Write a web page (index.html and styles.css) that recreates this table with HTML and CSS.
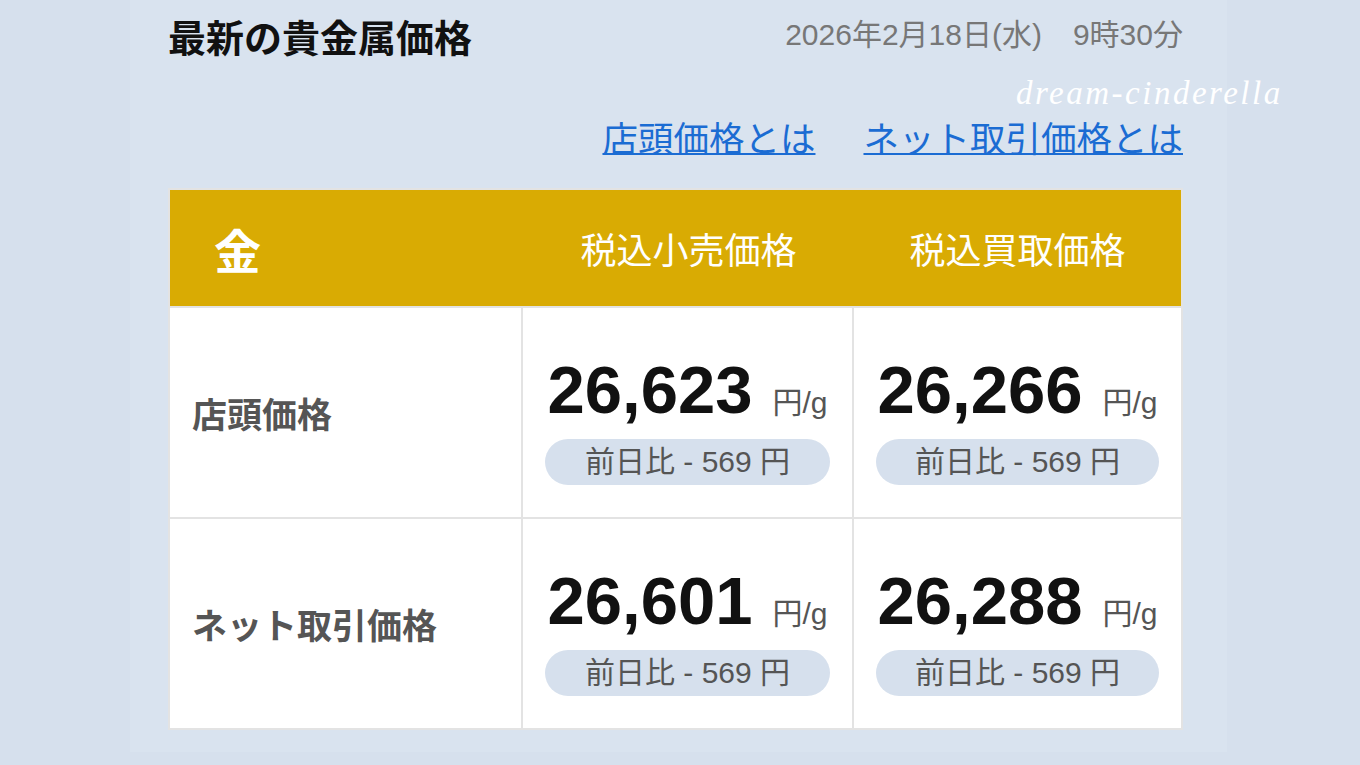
FILE: index.html
```html
<!DOCTYPE html>
<html lang="ja">
<head>
<meta charset="utf-8">
<title>最新の貴金属価格</title>
<link rel="stylesheet" href="styles.css">
</head>
<body>
<div class="page">
  <div class="top">
    <h1 class="title">最新の貴金属価格</h1>
    <div class="date">2026年2月18日(水)<span class="time">9時30分</span></div>
  </div>
  <div class="brand">dream-cinderella</div>
  <nav class="links">
    <a href="#">店頭価格とは</a>
    <a href="#">ネット取引価格とは</a>
  </nav>
  <div class="table">
    <div class="head">
      <div class="h-metal">金</div>
      <div class="h-col">税込小売価格</div>
      <div class="h-col">税込買取価格</div>
    </div>
    <div class="label">店頭価格</div>
    <div class="cell">
      <div class="price"><span class="num">26,623</span><span class="unit">円/g</span></div>
      <div class="diff">前日比 - 569 円</div>
    </div>
    <div class="cell">
      <div class="price"><span class="num">26,266</span><span class="unit">円/g</span></div>
      <div class="diff">前日比 - 569 円</div>
    </div>
    <div class="label">ネット取引価格</div>
    <div class="cell">
      <div class="price"><span class="num">26,601</span><span class="unit">円/g</span></div>
      <div class="diff">前日比 - 569 円</div>
    </div>
    <div class="cell">
      <div class="price"><span class="num">26,288</span><span class="unit">円/g</span></div>
      <div class="diff">前日比 - 569 円</div>
    </div>
  </div>
</div>
</body>
</html>
```

FILE: styles.css
```css
html, body {
  margin: 0;
  padding: 0;
}
body {
  background: #d6e0ed;
  font-family: "Liberation Sans", "Noto Sans CJK JP", sans-serif;
}
.page {
  position: relative;
  box-sizing: border-box;
  width: 1097px;
  height: 752px;
  margin-left: 130px;
  padding: 17px 44px 0 38px;
  background: #d9e3ef;
}
.top {
  display: flex;
  justify-content: space-between;
  align-items: flex-start;
}
.title {
  margin: 0;
  font-family: "Noto Sans CJK JP", sans-serif;
  font-weight: 700;
  font-size: 38px;
  line-height: 38px;
  color: #111;
}
.date {
  font-size: 30px;
  line-height: 30px;
  color: #777;
  padding-top: 3px;
}
.time {
  margin-left: 31px;
}
.brand {
  position: absolute;
  left: 886px;
  top: 75px;
  white-space: nowrap;
  font-family: "Liberation Serif", serif;
  font-style: italic;
  font-size: 33px;
  letter-spacing: 2.5px;
  color: #ffffff;
}
.links {
  display: flex;
  justify-content: flex-end;
  gap: 48px;
  margin-top: 64px;
}
.links a {
  font-family: "Noto Sans CJK JP", sans-serif;
  font-size: 35.5px;
  line-height: 36px;
  color: #1b6cd3;
  text-decoration: underline;
  text-decoration-thickness: 2px;
  text-underline-offset: 1px;
}
.table {
  margin-top: 33px;
  display: grid;
  grid-template-columns: 351px 329px 327px;
  grid-template-rows: 116px 209px 209px;
  gap: 2px;
  border: 2px solid #e3e3e3;
  background: #e3e3e3;
}
.head {
  grid-column: 1 / -1;
  display: grid;
  grid-template-columns: 353px 331px 327px;
  align-items: center;
  background: #d9ab03;
  color: #fff;
  font-family: "Noto Sans CJK JP", sans-serif;
}
.h-metal {
  padding-left: 44px;
  font-size: 47px;
  font-weight: 700;
  line-height: 1;
}
.h-col {
  text-align: center;
  font-size: 36px;
  line-height: 1;
}
.label {
  display: flex;
  align-items: center;
  padding-left: 22px;
  background: #fff;
  font-family: "Noto Sans CJK JP", sans-serif;
  font-weight: 700;
  font-size: 35px;
  color: #555;
}
.cell {
  display: flex;
  flex-direction: column;
  align-items: center;
  padding: 45px 22px 0;
  background: #fff;
}
.price {
  font-size: 67px;
  line-height: 73px;
  white-space: nowrap;
}
.num {
  font-weight: 700;
  color: #111;
}
.unit {
  margin-left: 20px;
  font-size: 30px;
  line-height: 1;
  color: #555;
}
.diff {
  box-sizing: border-box;
  align-self: stretch;
  margin-top: 13px;
  height: 46px;
  border-radius: 23px;
  background: #d6e0ed;
  color: #555;
  font-size: 30px;
  line-height: 46px;
  text-align: center;
}
```
